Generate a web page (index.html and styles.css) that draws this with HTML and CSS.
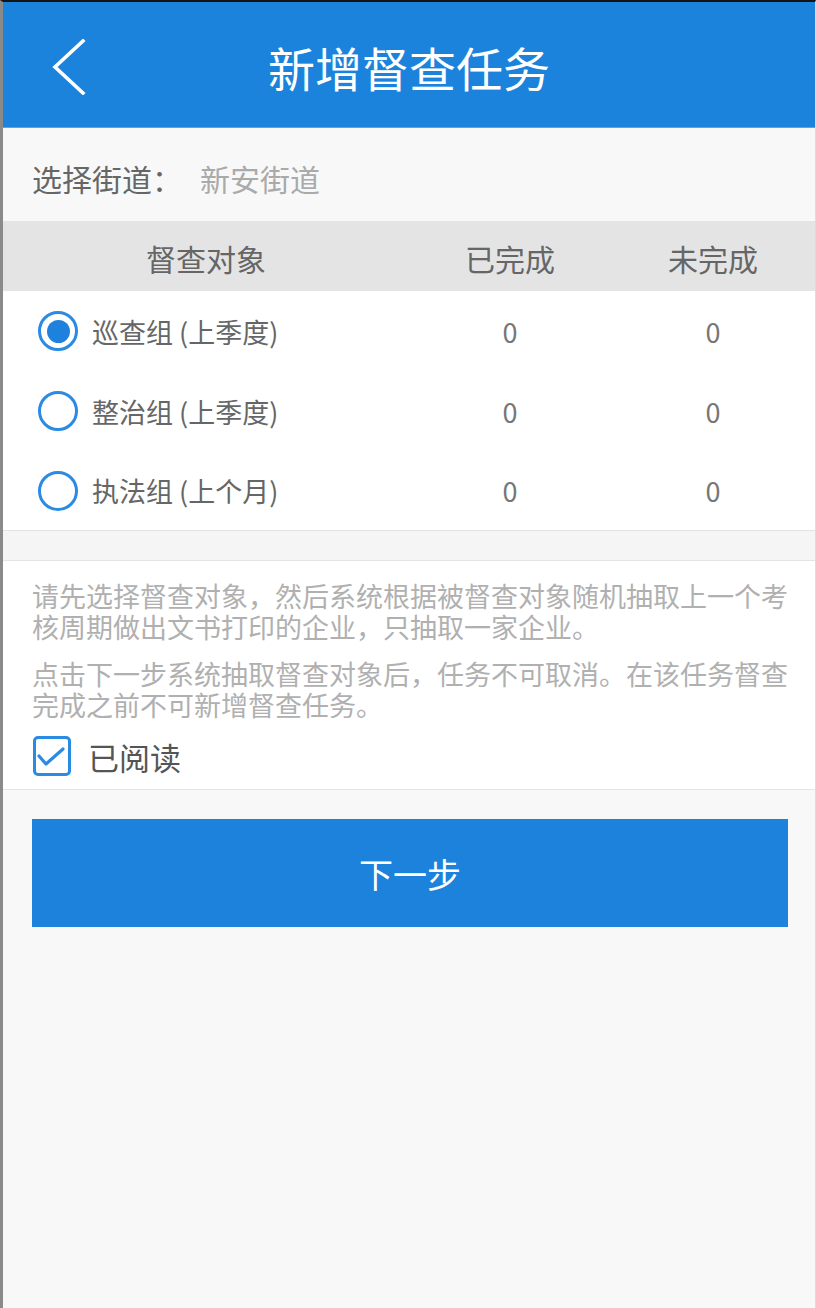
FILE: index.html
```html
<!DOCTYPE html>
<html lang="zh-CN">
<head>
<meta charset="utf-8">
<title>新增督查任务</title>
<link rel="stylesheet" href="styles.css">
</head>
<body>
<div class="screen">
  <header class="topbar">
    <span class="back">
      <svg width="36" height="56" viewBox="0 0 36 56"><polyline points="31,2 3,28 31,54" fill="none" stroke="#fff" stroke-width="3.6" stroke-linecap="square" stroke-linejoin="miter"/></svg>
    </span>
    <h1 class="title">新增督查任务</h1>
  </header>

  <div class="street">
    <span class="street-label">选择街道：</span>
    <span class="street-value">新安街道</span>
  </div>

  <div class="table">
    <div class="thead">
      <div class="cell">督查对象</div>
      <div class="cell">已完成</div>
      <div class="cell">未完成</div>
    </div>
    <div class="trow">
      <div class="cell name"><span class="radio checked"></span><span>巡查组 (上季度)</span></div>
      <div class="cell num">0</div>
      <div class="cell num">0</div>
    </div>
    <div class="trow">
      <div class="cell name"><span class="radio"></span><span>整治组 (上季度)</span></div>
      <div class="cell num">0</div>
      <div class="cell num">0</div>
    </div>
    <div class="trow last">
      <div class="cell name"><span class="radio"></span><span>执法组 (上个月)</span></div>
      <div class="cell num">0</div>
      <div class="cell num">0</div>
    </div>
  </div>

  <div class="spacer"></div>

  <section class="info">
    <p>请先选择督查对象，然后系统根据被督查对象随机抽取上一个考核周期做出文书打印的企业，只抽取一家企业。</p>
    <p>点击下一步系统抽取督查对象后，任务不可取消。在该任务督查完成之前不可新增督查任务。</p>
    <label class="agree">
      <span class="checkbox">
        <svg width="32" height="32" viewBox="0 0 32 32"><polyline points="3,16 10,24 27,9" fill="none" stroke="#2a8be2" stroke-width="3.2" stroke-linecap="round" stroke-linejoin="round"/></svg>
      </span>
      <span class="agree-text">已阅读</span>
    </label>
  </section>

  <div class="actions">
    <button class="next" type="button">下一步</button>
  </div>
</div>
</body>
</html>
```

FILE: styles.css
```css
* { box-sizing: border-box; }
html, body { margin: 0; padding: 0; }
body {
  font-family: "Noto Sans CJK SC", "Noto Sans", "DejaVu Sans", sans-serif;
  background: #f8f8f8;
}
.screen {
  width: 816px;
  min-height: 1308px;
  background: #f8f8f8;
  border-top: 2px solid #141414;
  border-left: 3px solid #8a8a8a;
  border-right: 1px solid #dcdcdc;
}
.topbar {
  height: 126px;
  background: #1c83dd;
  border-bottom: 1px solid #5aa5e8;
  display: flex;
  align-items: center;
  justify-content: center;
  position: relative;
}
.back {
  position: absolute;
  left: 49px;
  top: 37px;
  width: 36px;
  height: 56px;
  display: block;
}
.back svg { display: block; }
.title {
  margin: 0;
  color: #fff;
  font-size: 47px;
  font-weight: 400;
  line-height: 1;
  padding-top: 4px;
}
.street {
  height: 93px;
  display: flex;
  align-items: center;
  padding: 6px 0 0 29px;
  font-size: 30px;
  line-height: 1;
}
.street-label { color: #666; }
.street-value { color: #aaa; margin-left: 18px; }

.table { background: #fff; }
.thead, .trow {
  display: grid;
  grid-template-columns: 406px 202px 1fr;
}
.thead {
  height: 70px;
  background: #e4e4e4;
  font-size: 30px;
  color: #666;
}
.cell {
  display: flex;
  align-items: center;
  justify-content: center;
  line-height: 1;
}
.thead .cell { padding-top: 4px; }
.trow {
  height: 80px;
  font-size: 27px;
  color: #666;
}
.trow.last {
  height: 80px;
  border-bottom: 1px solid #e4e4e4;
}
.trow .cell.name {
  justify-content: flex-start;
  padding-left: 35px;
  gap: 14px;
}
.trow .cell.num { color: #777; }
.radio {
  width: 40px;
  height: 40px;
  border: 3px solid #2a8be2;
  border-radius: 50%;
  display: flex;
  align-items: center;
  justify-content: center;
  flex: none;
}
.radio.checked::after {
  content: "";
  width: 23px;
  height: 23px;
  border-radius: 50%;
  background: #1e82dc;
}
.spacer {
  height: 29px;
  background: #f5f5f5;
}
.info {
  background: #fff;
  border-top: 1px solid #e4e4e4;
  border-bottom: 1px solid #e4e4e4;
  padding: 19px 27px 13px 29px;
}
.info p {
  margin: 0 0 16px;
  font-size: 27px;
  line-height: 31px;
  color: #b0b0b0;
}
.info p + p { margin-bottom: 0; }
.agree {
  display: flex;
  align-items: center;
  gap: 17px;
  margin-top: 16px;
  height: 40px;
}
.checkbox {
  width: 38px;
  height: 40px;
  border: 3px solid #2a8be2;
  border-radius: 5px;
  display: flex;
  align-items: center;
  justify-content: center;
  flex: none;
  margin-left: 1px;
}
.checkbox svg { display: block; }
.agree-text {
  font-size: 31px;
  color: #555;
  line-height: 1;
}
.actions {
  padding: 29px 27px 0 29px;
}
.next {
  display: block;
  width: 100%;
  height: 108px;
  border: 0;
  background: #1c82dc;
  color: #fff;
  font-family: inherit;
  font-size: 34px;
  padding: 0;
}
```
